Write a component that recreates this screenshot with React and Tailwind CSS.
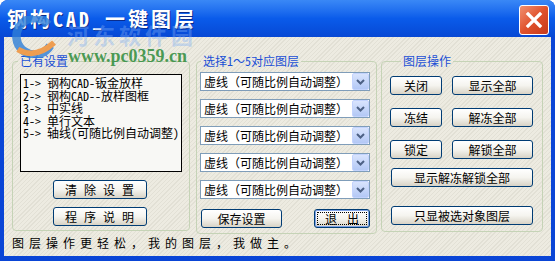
import React from 'react';

const presets = [
  '1-> 钢构CAD-钣金放样',
  '2-> 钢构CAD--放样图框',
  '3-> 中实线',
  '4-> 单行文本',
  '5-> 轴线(可随比例自动调整)',
];

const lineTypes = Array.from({ length: 5 }, () => '虚线（可随比例自动调整）');

// XP-style push button
const Btn = ({ children, className = '', focused = false }) => (
  <button
    className={
      'h-[19px] shrink-0 rounded-[3px] border border-[#003C74] bg-gradient-to-b from-white via-[#F5F4EF] to-[#D8D3C6] text-[12px] leading-none text-black flex items-center justify-center ' +
      (focused ? 'outline outline-1 outline-dotted outline-black -outline-offset-4 shadow-[inset_0_0_0_1px_#7EA2E8] ' : '') +
      className
    }
  >
    {children}
  </button>
);

// combo box with the blue drop-down arrow
const Combo = ({ value }) => (
  <div className="w-[170px] h-[19px] border border-[#7F9DB9] bg-white flex items-center justify-between">
    <span className="pl-[3px] text-[12px] leading-none text-black whitespace-nowrap">{value}</span>
    <div className="w-[17px] h-[17px] rounded-[2px] border border-[#C3D3FD] bg-gradient-to-b from-[#D9E4FD] to-[#B3C8F5] flex items-center justify-center">
      <svg width="9" height="6" viewBox="0 0 9 6">
        <path d="M1 1 L4.5 4.5 L8 1" fill="none" stroke="#4D6185" strokeWidth="2" />
      </svg>
    </div>
  </div>
);

const Group = ({ title, className = '', legendClass = '', children }) => (
  <fieldset className={'shrink-0 rounded-[4px] border border-[#C5D3B6] ' + className}>
    <legend className={'px-[2px] text-[12px] leading-[14px] text-[#1A4FD6] ' + legendClass}>{title}</legend>
    {children}
  </fieldset>
);

export default function App() {
  return (
    <div className="relative w-[555px] h-[261px] overflow-hidden bg-white font-[family-name:'Noto_Sans_Mono_CJK_SC','Noto_Sans_CJK_SC',sans-serif]">
      <div className="flex h-full flex-col rounded-t-[8px] bg-[#0A45D6]">
        {/* title bar */}
        <div className="flex h-[37px] shrink-0 items-start justify-between rounded-t-[8px] bg-gradient-to-b from-[#3A88F6] via-[#0A5BEA] to-[#0748D4]">
          <div className="self-center pl-[7px] text-[20px] font-bold leading-none tracking-[3px] text-white [text-shadow:1px_1px_0_#0A2C8C]">
            钢构CAD_一键图层
          </div>
          <div className="mt-[5px] mr-[6px] flex h-[30px] w-[30px] items-center justify-center rounded-[3px] border border-white bg-gradient-to-br from-[#F08F6E] via-[#E0512C] to-[#C6391A]">
            <svg width="18" height="18" viewBox="0 0 18 18">
              <path d="M3 3 L15 15 M15 3 L3 15" stroke="white" strokeWidth="3.2" strokeLinecap="square" />
            </svg>
          </div>
        </div>

        {/* client area */}
        <div className="mx-[4px] mb-[5px] flex flex-1 flex-col bg-[#EAE8DD] bg-[repeating-linear-gradient(135deg,#EDEBE1_0px,#EDEBE1_2px,#E2E0D5_2px,#E2E0D5_3px)] pl-[8px] pt-[17px]">
          <div className="flex items-start">
            <Group title="已有设置" className="w-[178px] h-[177px] px-[7px]" legendClass="ml-[-2px]">
              <div className="mt-[6px] h-[98px] w-[162px] border border-black bg-[#F8F8F5] pl-[2px] pt-[2px] text-[12px] leading-[12.5px] text-black">
                {presets.map((p) => (
                  <div key={p} className="whitespace-nowrap">{p}</div>
                ))}
              </div>
              <div className="mt-[8px] flex flex-col items-center gap-[8px] pr-[2px]">
                <Btn className="w-[94px] tracking-[7px] pl-[6px]">清除设置</Btn>
                <Btn className="w-[94px] tracking-[7px] pl-[6px]">程序说明</Btn>
              </div>
            </Group>

            <Group title="选择1～5对应图层" className="ml-[6px] w-[181px] h-[180px] px-[3px]" legendClass="ml-[1px]">
              <div className="mt-[4px] flex flex-col gap-[8px]">
                {lineTypes.map((t, i) => (
                  <Combo key={i} value={t} />
                ))}
              </div>
              <div className="mt-[10px] flex justify-between pl-[1px] pr-[3px]">
                <Btn className="w-[81px]">保存设置</Btn>
                <Btn className="w-[56px] tracking-[10px] pl-[10px]" focused>退出</Btn>
              </div>
            </Group>

            <Group title="图层操作" className="ml-[4px] w-[162px] h-[178px] pl-[8px]" legendClass="ml-[11px]">
              <div className="mt-[8px] flex flex-col">
                <div className="flex gap-[10px]">
                  <Btn className="w-[52px]">关闭</Btn>
                  <Btn className="w-[81px]">显示全部</Btn>
                </div>
                <div className="mt-[13px] flex gap-[10px]">
                  <Btn className="w-[52px]">冻结</Btn>
                  <Btn className="w-[81px]">解冻全部</Btn>
                </div>
                <div className="mt-[13px] flex gap-[10px]">
                  <Btn className="w-[52px]">锁定</Btn>
                  <Btn className="w-[81px]">解锁全部</Btn>
                </div>
                <Btn className="mt-[9px] ml-[1px] w-[142px]">显示解冻解锁全部</Btn>
                <Btn className="mt-[19px] ml-[1px] w-[142px]">只显被选对象图层</Btn>
              </div>
            </Group>
          </div>

          <div className="mt-[2px] whitespace-nowrap text-[12px] leading-[14px] tracking-[5px] text-black">
            图层操作更轻松，我的图层，我做主。
          </div>
        </div>
      </div>

      {/* site stamp over the dialog */}
      <svg className="pointer-events-none absolute left-[6px] top-[16px] opacity-80" width="56" height="42" viewBox="0 0 58 44">
        <path d="M44 9 A19 19 0 1 0 46 31" fill="none" stroke="#2F7FD8" strokeWidth="9" />
        <path d="M12 35 Q30 46 50 28" fill="none" stroke="#F08C2E" strokeWidth="6" />
      </svg>
      <div className="pointer-events-none absolute left-[67px] top-[23px] text-[22px] font-bold leading-none tracking-[4px] text-[#7FAEF5]/40">
        河东软件园
      </div>
      <div className="pointer-events-none absolute left-[68px] top-[47px] font-['Liberation_Serif',serif] text-[18px] font-bold leading-none text-[#2E8B3A]/85">
        www.pc0359.cn
      </div>
    </div>
  );
}
